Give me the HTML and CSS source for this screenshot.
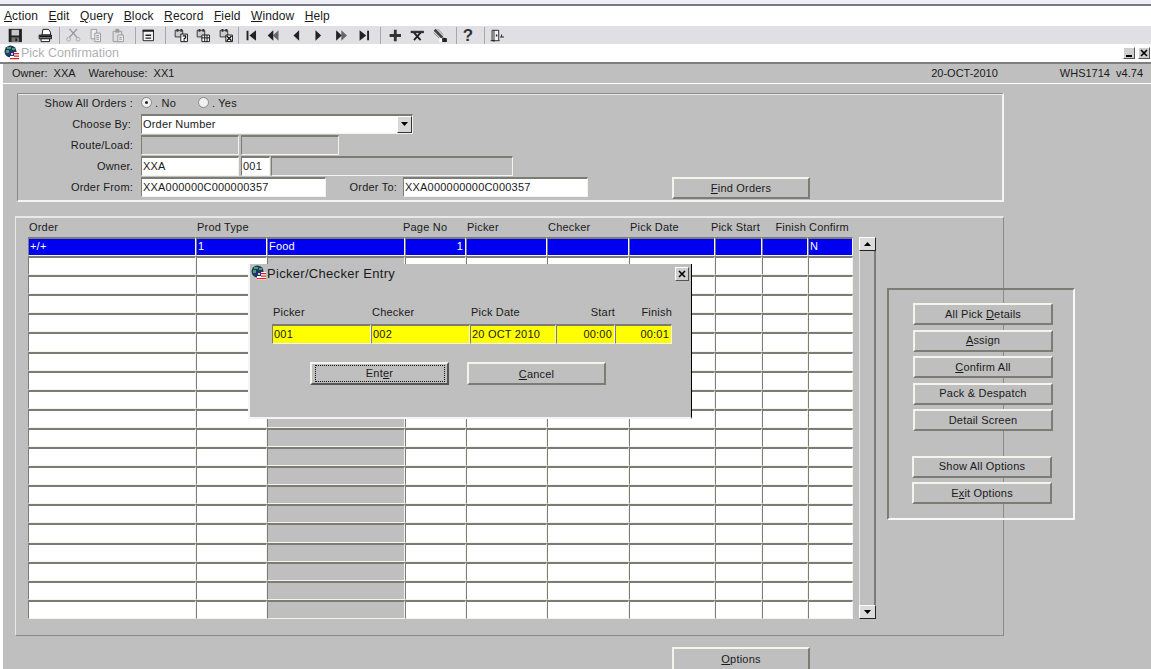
FILE: index.html
```html
<!DOCTYPE html>
<html lang="en">
<head>
<meta charset="utf-8">
<title>Pick Confirmation</title>
<link rel="stylesheet" href="styles.css">
</head>
<body>
<div class="page">
  <div class="topstrip"></div>
  <nav class="menu">
    <span><u>A</u>ction</span><span><u>E</u>dit</span><span><u>Q</u>uery</span><span><u>B</u>lock</span><span><u>R</u>ecord</span><span><u>F</u>ield</span><span><u>W</u>indow</span><span><u>H</u>elp</span>
  </nav>
  <div class="toolbar">
    <svg class="tool" viewBox="0 0 18 18"><path fill="#222" d="M2 2h14v14H2z"/><path fill="#c8c8c8" d="M5 3h8v6H5z"/><path fill="#777" d="M5 11h8v5H5z"/><path fill="#222" d="M9 12h2v3H9z"/></svg>
    <svg class="tool t-print" viewBox="0 0 18 18"><path fill="#fff" stroke="#111" d="M6.500 2.500h6l2 3v3h-9z"/><path fill="#bbb" stroke="#111" d="M2.500 8.500h13v4h-13z"/><path fill="#fff" stroke="#111" d="M4.500 12.500h9v3h-9z"/><path fill="#111" d="M3 9h12v2H3z"/></svg>
    <i class="sep s-a"></i>
    <svg class="tool" viewBox="0 0 18 18"><path fill="none" stroke="#999" stroke-width="1.500" d="M5 2l8 9M13 2l-8 9"/><circle cx="4" cy="13" r="2" fill="none" stroke="#aaa"/><circle cx="14" cy="13" r="2" fill="none" stroke="#aaa"/></svg>
    <svg class="tool" viewBox="0 0 18 18"><path fill="#eee" stroke="#999" d="M4.500 2.500h6v10h-6z"/><path fill="#eee" stroke="#999" d="M8.500 6.500h6v9h-6z"/><path stroke="#999" d="M10 9h3M10 11h3M10 13h3"/></svg>
    <svg class="tool" viewBox="0 0 18 18"><path fill="#ddd" stroke="#999" d="M3.500 4.500h9v11h-9z"/><path fill="#999" d="M6 2h4v4H6z"/><path fill="#eee" stroke="#999" d="M8.500 8.500h6v7h-6z"/><path stroke="#999" d="M10 11h3M10 13h3"/></svg>
    <i class="sep s-b"></i>
    <svg class="tool" viewBox="0 0 18 18"><path fill="#f4f4f4" stroke="#222" d="M3.500 3.500h11v11h-11z"/><path fill="#222" d="M3 3h12v2H3zM6 8h6v1.500H6zM6 11h6v1.500H6z"/></svg>
    <i class="sep s-c"></i>
    <svg class="tool" viewBox="0 0 18 18"><path fill="#ccc" stroke="#333" d="M2.500 3.500h8v7h-8z"/><path fill="#333" d="M4 2h2v3H4zM8 2h2v3H8z"/><path fill="#fff" stroke="#111" d="M8.500 7.500h7v8h-7z"/><path fill="none" stroke="#111" stroke-width="1.300" d="M10.500 9.500h3v2l-1.500 1v1M12 14v1"/></svg>
    <svg class="tool" viewBox="0 0 18 18"><path fill="#ccc" stroke="#333" d="M2.500 3.500h8v7h-8z"/><path fill="#333" d="M4 2h2v3H4zM8 2h2v3H8z"/><path fill="#fff" stroke="#111" d="M7.500 8.500h8v7h-8zM7.500 11.500h8M10.500 8.500v7M13 8.500v7"/></svg>
    <svg class="tool" viewBox="0 0 18 18"><path fill="#ccc" stroke="#333" d="M2.500 3.500h8v7h-8z"/><path fill="#333" d="M4 2h2v3H4zM8 2h2v3H8z"/><path fill="#fff" stroke="#111" d="M8.500 8.500h7v7h-7z"/><path stroke="#111" stroke-width="1.500" d="M9.500 9.500l5 5M14.500 9.500l-5 5"/></svg>
    <i class="sep s-d"></i>
    <svg class="tool" viewBox="0 0 18 18"><path fill="#222" d="M4 4h2v10H4zM14 3.500v11L7 9z"/></svg>
    <svg class="tool" viewBox="0 0 18 18"><path fill="#222" d="M9 3.500v11L3 9z"/><path fill="#666" d="M14.500 3.500v11L8.500 9z"/></svg>
    <svg class="tool" viewBox="0 0 18 18"><path fill="#222" d="M12 3.500v11L6 9z"/></svg>
    <svg class="tool" viewBox="0 0 18 18"><path fill="#222" d="M6 3.500v11L12 9z"/></svg>
    <svg class="tool" viewBox="0 0 18 18"><path fill="#666" d="M9 3.500v11L15 9z"/><path fill="#222" d="M3.500 3.500v11L9.500 9z"/></svg>
    <svg class="tool" viewBox="0 0 18 18"><path fill="#222" d="M12 4h2v10h-2zM4 3.500v11L11 9z"/></svg>
    <i class="sep s-e"></i>
    <svg class="tool" viewBox="0 0 18 18"><path fill="#333" d="M7.500 3h3v4.500H15v3h-4.500V15h-3v-4.500H3v-3h4.500z"/></svg>
    <svg class="tool" viewBox="0 0 18 18"><path fill="#333" d="M2 4h14v2.500H2z"/><path stroke="#222" stroke-width="2" d="M5.500 6l7 8M12.500 6l-7 8"/></svg>
    <svg class="tool" viewBox="0 0 18 18"><path stroke="#444" stroke-width="3" d="M3 3l8 8"/><path stroke="#888" d="M2 6l6 6M6 2l6 6"/><path fill="#fff" d="M8 12h8v4H8z"/><path fill="#222" d="M11 11l5 1v4h-5z"/></svg>
    <i class="sep s-f"></i>
    <b class="tool help">?</b>
    <i class="sep s-g"></i>
    <svg class="tool" viewBox="0 0 18 18"><path fill="#f4f4f4" stroke="#222" d="M3.500 3.500h7v11h-7z"/><path fill="none" stroke="#222" d="M5.500 3.500v12M2 14.500h4M10.500 14.500h1"/><path fill="#222" d="M7.500 8h1.500v2H7.500zM12 10h4v1h-4zM13 8h1v2h-1z"/></svg>
  </div>
  <header class="titlebar">
    <svg class="appicon" viewBox="0 0 16 16"><circle cx="6.500" cy="6.500" r="6" fill="#1c3c5c"/><path fill="#4f9a78" d="M3 2h4v2H3zM2 5h3v3H2zM8 3h3v2H8z"/><path fill="#fff" d="M6 7h9v8H6z"/><path fill="#2020c0" d="M6 7h4v4H6z"/><path fill="#e02020" d="M10 8h5v1.300h-5zM10 10.500h5v1.300h-5zM6 13h9v1.300H6z"/><path fill="#e8e020" d="M7 8h2v2H7z"/></svg>
    <span class="titletext">Pick Confirmation</span>
    <span class="winbtns">
      <span class="winbtn"><i class="minbar"></i></span>
      <span class="winbtn"><svg class="xicon" viewBox="0 0 8 8"><path stroke="#000" stroke-width="1.600" d="M1 1l6 6M7 1L1 7"/></svg></span>
    </span>
  </header>
  <main class="work">
    <div class="status">
      <span class="st-owner">Owner:&nbsp; XXA</span>
      <span class="st-wh">Warehouse:&nbsp; XX1</span>
      <span class="st-date">20-OCT-2010</span>
      <span class="st-ver">WHS1714&nbsp; v4.74</span>
    </div>

    <section class="form">
      <div class="frow r1">
        <label class="lbl">Show All Orders :</label>
        <span class="radio on"></span><span class="rtext">. No</span>
        <span class="radio r-yes"></span><span class="rtext">. Yes</span>
      </div>
      <div class="frow r2">
        <label class="lbl l-chose">Choose By:</label>
        <div class="field w272 select">Order Number<span class="drop"><svg class="droparrow" viewBox="0 0 7 4"><path d="M0 0h7L3.500 4z"/></svg></span></div>
      </div>
      <div class="frow r3">
        <label class="lbl">Route/Load:</label>
        <div class="field w98 off"></div>
        <div class="field w98 off g3"></div>
      </div>
      <div class="frow r4">
        <label class="lbl">Owner.</label>
        <div class="field w98">XXA</div>
        <div class="field w29 g3">001</div>
        <div class="field w242 off g1"></div>
      </div>
      <div class="frow r5">
        <label class="lbl">Order From:</label>
        <div class="field w185">XXA000000C000000357</div>
        <label class="lbl-to">Order To:</label>
        <div class="field w185">XXA000000000C000357</div>
        <button class="btn find"><u>F</u>ind Orders</button>
      </div>
    </section>

    <section class="tablepanel">
      <div class="tablewrap">
        <div class="tablecol">
          <div class="thead cols">
            <span>Order</span><span>Prod Type</span><span></span><span class="th-page">Page No</span><span>Picker</span><span>Checker</span><span>Pick Date</span><span class="th-end">Pick Start</span><span class="th-end">Finish</span><span>Confirm</span>
          </div>
          <div class="tbody">
            <div class="cols row sel"><div class="c">+/+</div><div class="c">1</div><div class="c">Food</div><div class="c num">1</div><div class="c"></div><div class="c"></div><div class="c"></div><div class="c"></div><div class="c"></div><div class="c">N</div></div>
            <div class="cols row"><div class="c"></div><div class="c"></div><div class="c g"></div><div class="c"></div><div class="c"></div><div class="c"></div><div class="c"></div><div class="c"></div><div class="c"></div><div class="c"></div></div>
            <div class="cols row"><div class="c"></div><div class="c"></div><div class="c g"></div><div class="c"></div><div class="c"></div><div class="c"></div><div class="c"></div><div class="c"></div><div class="c"></div><div class="c"></div></div>
            <div class="cols row"><div class="c"></div><div class="c"></div><div class="c g"></div><div class="c"></div><div class="c"></div><div class="c"></div><div class="c"></div><div class="c"></div><div class="c"></div><div class="c"></div></div>
            <div class="cols row"><div class="c"></div><div class="c"></div><div class="c g"></div><div class="c"></div><div class="c"></div><div class="c"></div><div class="c"></div><div class="c"></div><div class="c"></div><div class="c"></div></div>
            <div class="cols row"><div class="c"></div><div class="c"></div><div class="c g"></div><div class="c"></div><div class="c"></div><div class="c"></div><div class="c"></div><div class="c"></div><div class="c"></div><div class="c"></div></div>
            <div class="cols row"><div class="c"></div><div class="c"></div><div class="c g"></div><div class="c"></div><div class="c"></div><div class="c"></div><div class="c"></div><div class="c"></div><div class="c"></div><div class="c"></div></div>
            <div class="cols row"><div class="c"></div><div class="c"></div><div class="c g"></div><div class="c"></div><div class="c"></div><div class="c"></div><div class="c"></div><div class="c"></div><div class="c"></div><div class="c"></div></div>
            <div class="cols row"><div class="c"></div><div class="c"></div><div class="c g"></div><div class="c"></div><div class="c"></div><div class="c"></div><div class="c"></div><div class="c"></div><div class="c"></div><div class="c"></div></div>
            <div class="cols row"><div class="c"></div><div class="c"></div><div class="c g"></div><div class="c"></div><div class="c"></div><div class="c"></div><div class="c"></div><div class="c"></div><div class="c"></div><div class="c"></div></div>
            <div class="cols row"><div class="c"></div><div class="c"></div><div class="c g"></div><div class="c"></div><div class="c"></div><div class="c"></div><div class="c"></div><div class="c"></div><div class="c"></div><div class="c"></div></div>
            <div class="cols row"><div class="c"></div><div class="c"></div><div class="c g"></div><div class="c"></div><div class="c"></div><div class="c"></div><div class="c"></div><div class="c"></div><div class="c"></div><div class="c"></div></div>
            <div class="cols row"><div class="c"></div><div class="c"></div><div class="c g"></div><div class="c"></div><div class="c"></div><div class="c"></div><div class="c"></div><div class="c"></div><div class="c"></div><div class="c"></div></div>
            <div class="cols row"><div class="c"></div><div class="c"></div><div class="c g"></div><div class="c"></div><div class="c"></div><div class="c"></div><div class="c"></div><div class="c"></div><div class="c"></div><div class="c"></div></div>
            <div class="cols row"><div class="c"></div><div class="c"></div><div class="c g"></div><div class="c"></div><div class="c"></div><div class="c"></div><div class="c"></div><div class="c"></div><div class="c"></div><div class="c"></div></div>
            <div class="cols row"><div class="c"></div><div class="c"></div><div class="c g"></div><div class="c"></div><div class="c"></div><div class="c"></div><div class="c"></div><div class="c"></div><div class="c"></div><div class="c"></div></div>
            <div class="cols row"><div class="c"></div><div class="c"></div><div class="c g"></div><div class="c"></div><div class="c"></div><div class="c"></div><div class="c"></div><div class="c"></div><div class="c"></div><div class="c"></div></div>
            <div class="cols row"><div class="c"></div><div class="c"></div><div class="c g"></div><div class="c"></div><div class="c"></div><div class="c"></div><div class="c"></div><div class="c"></div><div class="c"></div><div class="c"></div></div>
            <div class="cols row"><div class="c"></div><div class="c"></div><div class="c g"></div><div class="c"></div><div class="c"></div><div class="c"></div><div class="c"></div><div class="c"></div><div class="c"></div><div class="c"></div></div>
            <div class="cols row"><div class="c"></div><div class="c"></div><div class="c g"></div><div class="c"></div><div class="c"></div><div class="c"></div><div class="c"></div><div class="c"></div><div class="c"></div><div class="c"></div></div>
          </div>
        </div>
        <div class="scrollbar">
          <span class="sbtn"><svg class="sarrow" viewBox="0 0 7 4"><path d="M3.500 0L7 4H0z"/></svg></span>
          <span class="sbtn"><svg class="sarrow" viewBox="0 0 7 4"><path d="M0 0h7L3.500 4z"/></svg></span>
        </div>
      </div>
    </section>

    <button class="btn options"><u>O</u>ptions</button>
  </main>

  <aside class="sidepanel">
    <button class="btn"><span>All Pick <u>D</u>etails</span></button>
    <button class="btn"><span><u>A</u>ssign</span></button>
    <button class="btn"><span><u>C</u>onfirm All</span></button>
    <button class="btn"><span>Pack &amp; Despatch</span></button>
    <button class="btn"><span>Detail Screen</span></button>
    <button class="btn shift first-low"><span>Show All Options</span></button>
    <button class="btn shift"><span>E<u>x</u>it Options</span></button>
  </aside>

  <section class="dialog">
    <div class="dlgtitle">
      <svg class="appicon" viewBox="0 0 16 16"><circle cx="6.500" cy="6.500" r="6" fill="#1c3c5c"/><path fill="#4f9a78" d="M3 2h4v2H3zM2 5h3v3H2zM8 3h3v2H8z"/><path fill="#fff" d="M6 7h9v8H6z"/><path fill="#2020c0" d="M6 7h4v4H6z"/><path fill="#e02020" d="M10 8h5v1.300h-5zM10 10.500h5v1.300h-5zM6 13h9v1.300H6z"/><path fill="#e8e020" d="M7 8h2v2H7z"/></svg>
      <span>Picker/Checker Entry</span>
      <span class="winbtn dlgclose"><svg class="xicon" viewBox="0 0 8 8"><path stroke="#000" stroke-width="1.600" d="M1 1l6 6M7 1L1 7"/></svg></span>
    </div>
    <div class="dlggrid dlglabels">
      <span>Picker</span><span>Checker</span><span>Pick Date</span><span class="end">Start</span><span class="end">Finish</span>
    </div>
    <div class="dlggrid dlgfields">
      <div class="c y">001</div><div class="c y">002</div><div class="c y">20 OCT 2010</div><div class="c y num">00:00</div><div class="c y num">00:01</div>
    </div>
    <div class="dlgbtns">
      <button class="btn focus"><span class="dots">Ent<u>e</u>r</span></button>
      <button class="btn"><span><u>C</u>ancel</span></button>
    </div>
  </section>
</div>
</body>
</html>
```

FILE: styles.css
```css
* { box-sizing: border-box; }
html, body { margin: 0; padding: 0; background: #fff; }
body { font-family: "Liberation Sans", Arial, sans-serif; font-size: 11px; color: #1a1a1a; }
.page { position: relative; width: 1151px; height: 669px; overflow: hidden; letter-spacing: 0.2px; }

.topstrip { height: 6px; background: #eeeef4; border-bottom: 2px solid #77778a; }

.menu { height: 20px; display: flex; gap: 10.500px; padding: 3px 0 0 4px; font-size: 12px; line-height: 14px; background: #fff; letter-spacing: 0.100px; }

.toolbar { height: 18px; background: #e0e0e4; display: flex; align-items: center; padding-left: 4px; }
.tool { width: 22.600px; height: 17px; flex: none; display: block; }
.t-print { margin-left: 7.400px; }
.help { font: bold 17px/17px "Liberation Sans", sans-serif; text-align: center; color: #333; }
.sep { display: block; width: 1px; height: 17px; background: #a8a8ac; flex: none; }
.s-a { margin: 0 1.700px 0 2.400px; }
.s-b { margin: 0 0.700px 0 5.500px; }
.s-c { margin: 0 3.700px 0 5.700px; }
.s-d { margin: 0 0.700px 0 0.500px; }
.s-e { margin: 0 2.700px 0 4.700px; }
.s-f { margin: 0 0 0 4.500px; }
.s-g { margin: 0 1.700px 0 4.400px; }

.titlebar { height: 20px; background: #fff; border-bottom: 2px solid #7e7e7e; display: flex; align-items: center; padding-left: 4px; }
.appicon { width: 16px; height: 16px; flex: none; }
.titletext { font-size: 12.500px; color: #b0b0b4; margin-left: 1px; letter-spacing: 0; }
.winbtns { margin-left: auto; display: flex; gap: 3px; padding-right: 1px; }
.winbtn { width: 12px; height: 12px; background: #cfcfcf; border-top: 1px solid #fff; border-left: 1px solid #fff; border-right: 1px solid #555; border-bottom: 1px solid #555; display: flex; align-items: center; justify-content: center; position: relative; }
.minbar { display: block; width: 6px; height: 2px; background: #000; margin-top: 5px; }
.xicon { width: 8px; height: 8px; display: block; }

.work { margin-left: 3px; height: 605px; background: #bfbfbf; overflow: hidden; display: flex; flex-direction: column; }
.status { height: 20px; flex: none; border-bottom: 1px solid #fff; display: flex; align-items: center; padding-bottom: 2px; letter-spacing: 0; }
.st-owner { margin-left: 9px; }
.st-wh { margin-left: 13px; }
.st-date { margin-left: auto; margin-right: 62px; }
.st-ver { margin-right: 8px; }

.form { margin: 9px 0 0 14px; width: 987px; height: 109px; flex: none; border-top: 1px solid #8a8a8a; border-left: 1px solid #8a8a8a; border-right: 2px solid #f4f4f4; border-bottom: 2px solid #f4f4f4; box-shadow: inset 0 1px 0 #e8e8e8; display: flex; flex-direction: column; }
.frow { display: flex; align-items: center; }
.r1 { height: 17px; margin-bottom: 2px; }
.r2 { height: 21px; }
.r3 { height: 21px; }
.r4 { height: 21px; }
.r5 { height: 21px; }
.lbl { width: 115px; margin-right: 8px; text-align: right; flex: none; white-space: nowrap; }
.l-chose { padding-right: 2px; }
.lbl-to { width: 71px; margin: 0 6px 0 0; text-align: right; }
.radio { width: 11px; height: 11px; border-radius: 50%; background: #f0f0f0; border: 1px solid #888; flex: none; position: relative; }
.radio.on::after { content: ""; position: absolute; left: 3px; top: 3px; width: 3px; height: 3px; background: #222; border-radius: 50%; }
.r-yes { margin-left: 22px; }
.rtext { margin-left: 3px; }

.field, .c { border-top: 2px solid #7c7c74; border-left: 1px solid #7c7c74; border-right: 1px solid #f4f4ec; border-bottom: 1px solid #f4f4ec; background: #fff; white-space: nowrap; overflow: hidden; padding-left: 1px; line-height: 15px; }
.field { height: 20px; line-height: 16px; }
.off { background: #bfbfbf; }
.w272 { width: 272px; }
.w98 { width: 98px; }
.w29 { width: 29px; }
.w242 { width: 242px; }
.w185 { width: 185px; }
.g3 { margin-left: 2px; }
.g1 { margin-left: 1px; }
.select { position: relative; }
.drop { position: absolute; right: 0; top: 0; width: 15px; height: 17px; background: #d8d8d8; border-top: 1px solid #fff; border-left: 1px solid #fff; border-right: 1px solid #333; border-bottom: 1px solid #333; display: flex; align-items: center; justify-content: center; }
.droparrow { width: 7px; height: 4px; display: block; }

.btn { display: flex; align-items: center; justify-content: center; font: inherit; letter-spacing: inherit; color: #1a1a1a; background: #bfbfbf; padding: 0; border-top: 2px solid #f4f4ec; border-left: 2px solid #f4f4ec; border-right: 2px solid #7c7c74; border-bottom: 2px solid #7c7c74; }
.find { width: 138px; height: 22px; margin: 2px 0 0 84px; }
.options { width: 138px; height: 24px; flex: none; margin: 11px 0 0 669px; }

.tablepanel { margin: 14px 0 0 12px; width: 989px; height: 420px; flex: none; border-top: 2px solid #e8e8e8; border-left: 1px solid #e8e8e8; border-right: 1px solid #8a8a8a; border-bottom: 1px solid #8a8a8a; padding: 3px 0 0 12px; }
.tablewrap { display: flex; gap: 6px; }
.tablecol { width: 825px; flex: none; }
.cols { display: grid; grid-template-columns: 168px 71px 138px 61px 81px 82px 86px 47px 46px 45px; }
.thead { height: 16px; line-height: 13px; align-items: start; }
.thead span { white-space: nowrap; padding-left: 1px; }
.th-page { margin-left: -3px; }
.th-end { display: flex; justify-content: flex-end; padding-right: 2px; }
.tbody { display: grid; grid-auto-rows: 19.100px; }
.row .c { height: 100%; }
.c.g { background: #bfbfbf; }
.sel .c { background: #0000f0; color: #fff; }
.num { text-align: right; padding-right: 2px; }

.scrollbar { width: 17px; margin-top: 16px; height: 382px; background: #bfbfbf; border-left: 1px solid #e4e4e4; border-right: 2px solid #7c7c74; display: flex; flex-direction: column; justify-content: space-between; }
.sbtn { height: 14px; width: 17px; background: #dcdcdc; border-top: 1px solid #fff; border-left: 1px solid #fff; border-right: 1px solid #222; border-bottom: 1px solid #222; display: flex; align-items: center; justify-content: center; margin-left: -1px; }
.sarrow { width: 7px; height: 4px; display: block; }

.sidepanel { position: absolute; left: 887px; top: 288px; width: 188px; height: 232px; border-top: 2px solid #7c7c74; border-left: 2px solid #7c7c74; border-right: 2px solid #f8f8f8; border-bottom: 2px solid #f8f8f8; padding: 13px 0 0 24px; display: flex; flex-direction: column; gap: 4.500px; }
.sidepanel .btn { width: 140px; height: 22px; flex: none; }
.sidepanel .btn span { margin-top: -1px; }
.shift { margin-left: -1px; }
.first-low { margin-top: 20px; }

.dialog { position: absolute; left: 248px; top: 264px; width: 444px; height: 155px; background: #bfbfbf; border-left: 2px solid #f4f4f4; border-bottom: 2px solid #f4f4f4; border-right: 1px solid #000; padding: 0 0 0 22px; }
.dlgtitle { display: flex; align-items: center; height: 18px; font-size: 13px; margin-left: -21px; letter-spacing: 0.300px; }
.dlgclose { position: absolute; right: 2px; top: 3px; width: 14px; height: 14px; }
.dlggrid { display: grid; grid-template-columns: 99px 99px 86px 59px 57px; width: 400px; }
.dlglabels { margin-top: 24px; height: 18px; line-height: 13px; }
.dlglabels span { padding-left: 1px; }
.dlglabels .end { text-align: right; padding-right: 0; }
.dlgfields { height: 20px; }
.c.y { background: #ffff00; height: 20px; line-height: 16px; }
.dlgbtns { display: flex; gap: 18px; margin: 18px 0 0 38px; }
.dlgbtns .btn { width: 139px; height: 23px; }
.focus { border-right-color: #555; border-bottom-color: #555; }
.dots { display: block; width: 130px; height: 17px; line-height: 15px; border: 1px dotted #111; text-align: center; }
```
